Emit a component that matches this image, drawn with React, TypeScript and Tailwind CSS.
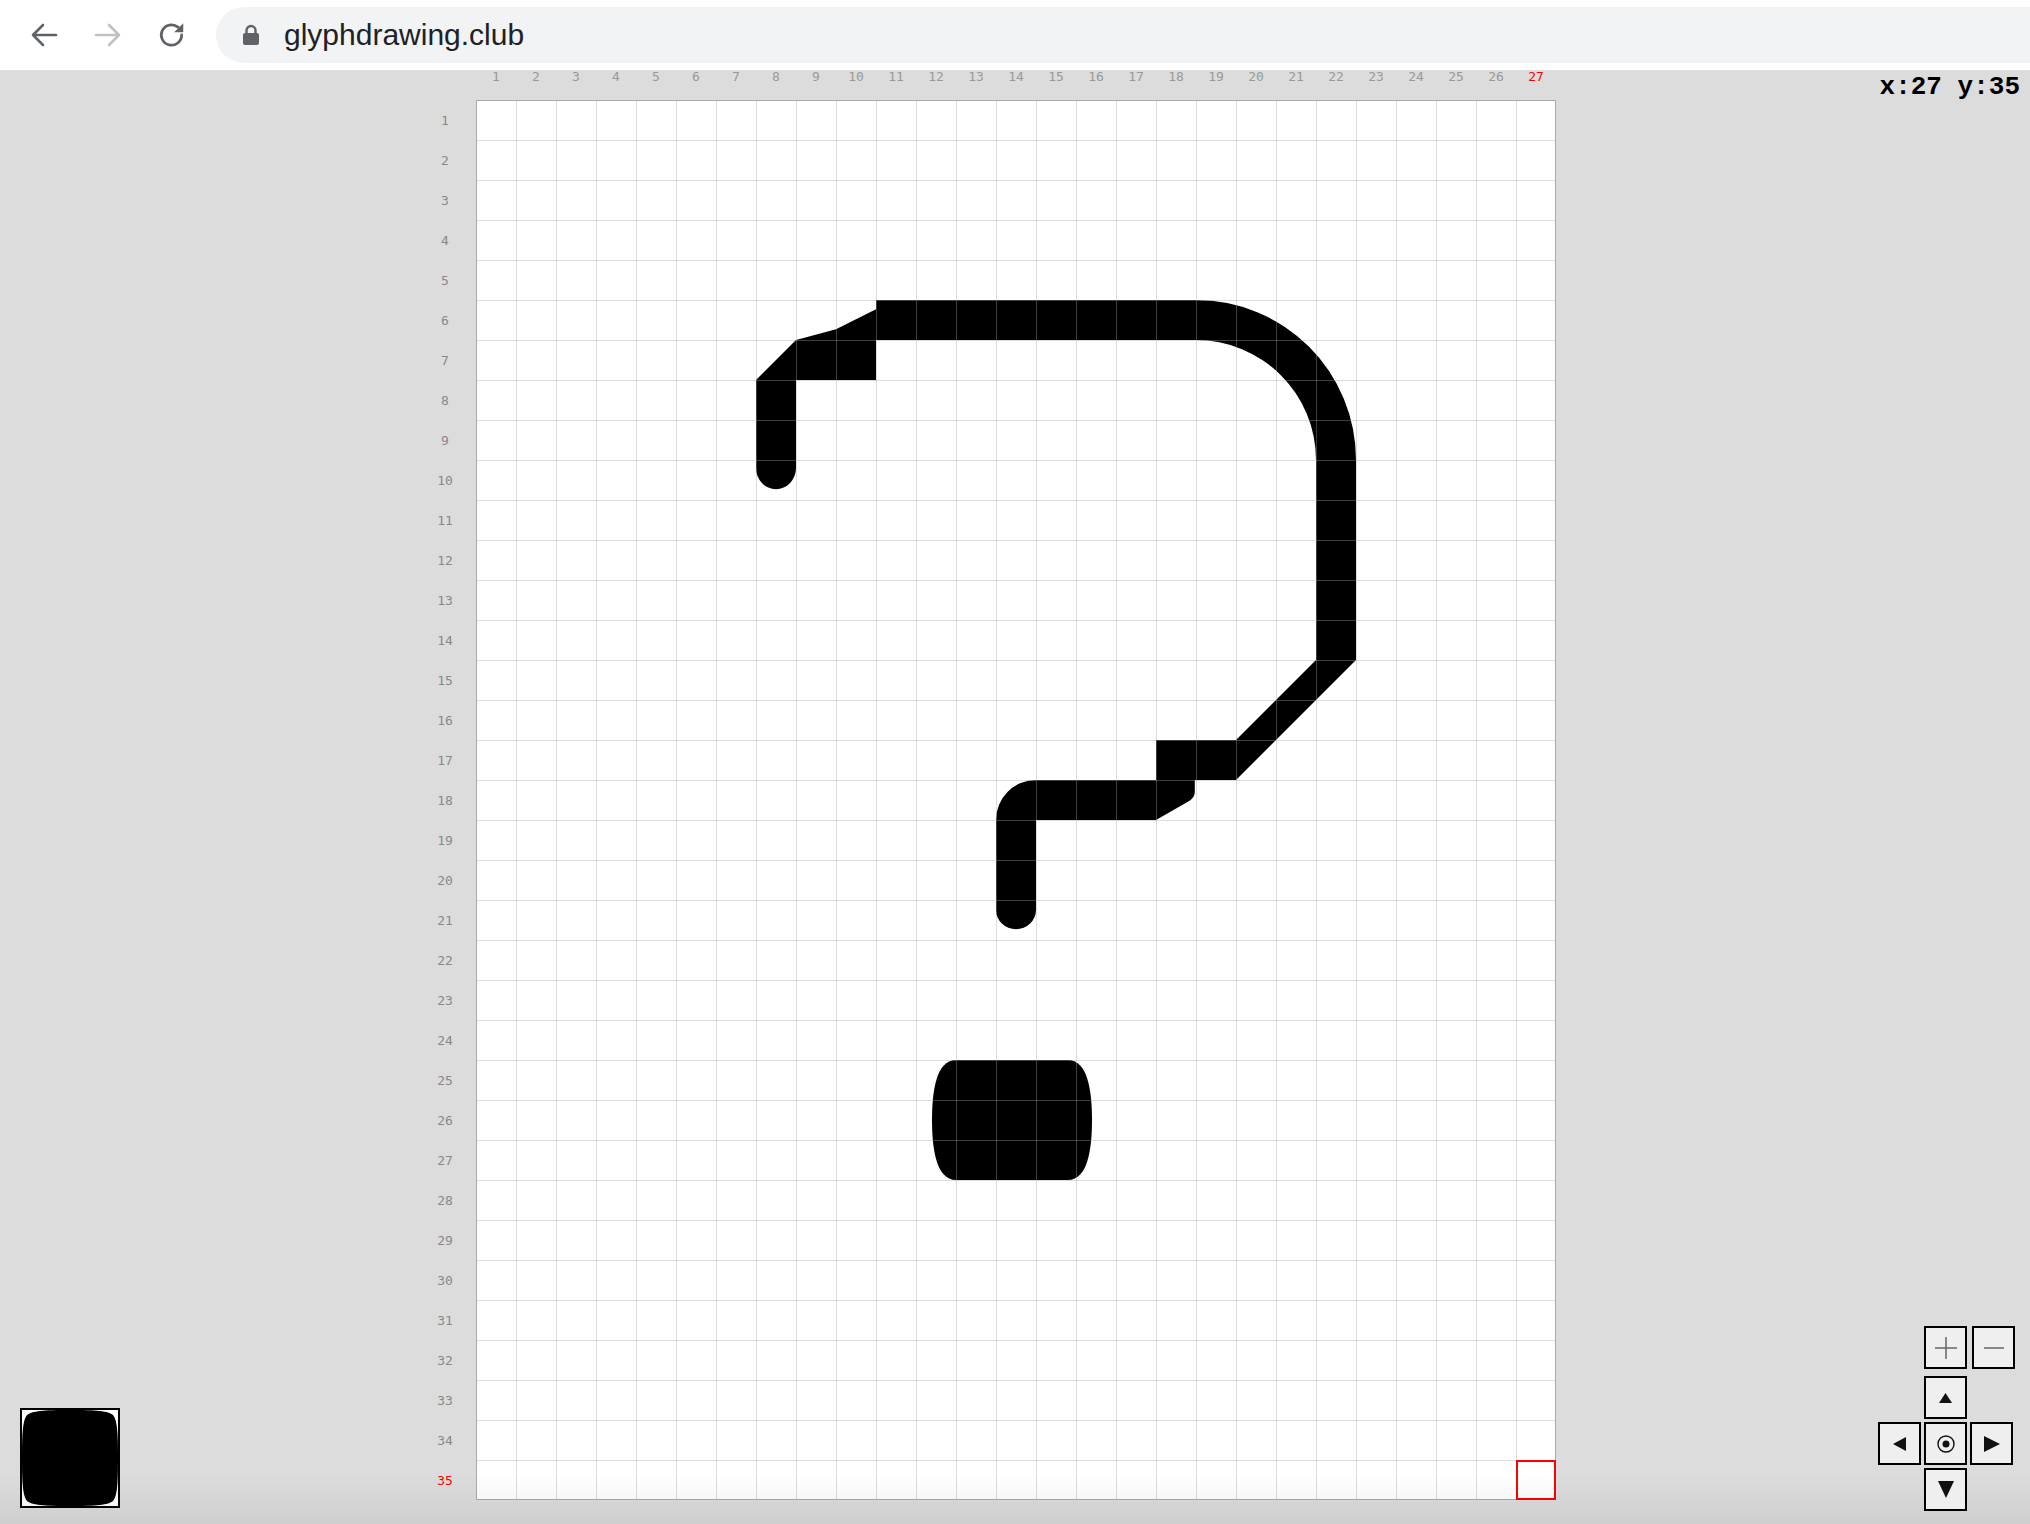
import React from "react";

const COLS = 27;
const ROWS = 35;
const CELL = 40;

// glyph outline, in cell units (1 unit = one grid square)
const GLYPH =
  "M10 5H18A4 4 0 0 1 22 9V14L19 17H17.97V17.3C17.97 17.45 17.85 17.52 17.7 17.6L17 18H14V20.25A0.5 0.48 0 0 1 13 20.25V18A1 1 0 0 1 14 17H17V16H19L21 14V9A3 3 0 0 0 18 6H10V7H8V9.2A0.5 0.53 0 0 1 7 9.2V7L8 6L9 5.73L10 5.23Z";
const DOT =
  "M12 24H14.8C15.3 24 15.4 24.8 15.4 25.5C15.4 26.2 15.3 27 14.8 27H12C11.5 27 11.4 26.2 11.4 25.5C11.4 24.8 11.5 24 12 24Z";
const BRUSH =
  "M48 0C75 0 86 1 91 5C95 10 96 21 96 48C96 75 95 86 91 91C86 95 75 96 48 96C21 96 10 95 5 91C1 86 0 75 0 48C0 21 1 10 5 5C10 1 21 0 48 0Z";

const BrowserBar = () => {
  return (
    <header className="h-[70px] bg-white flex items-center shrink-0 relative z-10">
      <div className="w-[216px] flex items-center">
        <svg width="28" height="24" viewBox="0 0 28 24" className="ml-[30px]">
          <path d="M26 12H3M13 2L3 12L13 22" fill="none" stroke="#5f6368" strokeWidth="2.6" strokeLinecap="round" strokeLinejoin="round" />
        </svg>
        <svg width="28" height="24" viewBox="0 0 28 24" className="ml-[36px]">
          <path d="M2 12H25M15 2L25 12L15 22" fill="none" stroke="#bdc1c6" strokeWidth="2.6" strokeLinecap="round" strokeLinejoin="round" />
        </svg>
        <svg width="30" height="30" viewBox="0 0 28 28" className="ml-[35px]">
          <path d="M23 14A9.5 9.5 0 1 1 19.6 6.7" fill="none" stroke="#5f6368" strokeWidth="2.6" strokeLinecap="round" />
          <path d="M24.5 3V11.5H16Z" fill="#5f6368" />
        </svg>
      </div>
      <div className="flex-1 h-[56px] bg-[#f1f3f4] rounded-l-full flex items-center">
        <svg width="18" height="22" viewBox="0 0 18 22" className="ml-[26px]">
          <path d="M4.5 10V6.5A4.5 4.5 0 0 1 13.5 6.5V10" fill="none" stroke="#5f6368" strokeWidth="2.4" />
          <rect x="1" y="9" width="16" height="12" rx="2" fill="#5f6368" />
        </svg>
        <span className="ml-[24px] text-[30px] text-[#202124] font-['Liberation_Sans',sans-serif] leading-none">
          glyphdrawing.club
        </span>
      </div>
    </header>
  );
};

const GridCanvas = () => {
  const w = COLS * CELL;
  const h = ROWS * CELL;
  return (
    <svg width={w} height={h} viewBox={`0 0 ${w} ${h}`} className="block bg-white">
      <g transform={`scale(${CELL})`}>
        <path d={GLYPH} fill="#000" />
        <path d={DOT} fill="#000" />
      </g>
      {Array.from({ length: COLS - 1 }, (_, i) => (
        <rect key={"v" + i} x={(i + 1) * CELL} y={0} width={1} height={h} fill="#a2a2a2" fillOpacity={0.38} />
      ))}
      {Array.from({ length: ROWS - 1 }, (_, i) => (
        <rect key={"h" + i} x={0} y={(i + 1) * CELL} width={w} height={1} fill="#a2a2a2" fillOpacity={0.38} />
      ))}
      <rect x={0.5} y={0.5} width={w - 1} height={h - 1} fill="none" stroke="#a9a9a9" />
      <rect x={26 * CELL + 1} y={34 * CELL + 1} width={CELL - 2} height={CELL - 2} fill="none" stroke="#ff0000" strokeWidth={2} />
    </svg>
  );
};

const CtrlButton = ({ children }: { children: React.ReactNode }) => (
  <div className="w-[43px] h-[43px] border-2 border-black bg-[#efefef] flex items-center justify-center">
    {children}
  </div>
);

const Controls = () => {
  return (
    <div className="absolute right-[17px] bottom-[13px] flex flex-col items-end gap-[7px]">
      <div className="flex gap-[5px] -mr-[2px]">
        <CtrlButton>
          <svg width="22" height="22" viewBox="0 0 22 22">
            <path d="M11 0V22M0 11H22" stroke="#666" strokeWidth="1.5" />
          </svg>
        </CtrlButton>
        <CtrlButton>
          <svg width="22" height="22" viewBox="0 0 22 22">
            <path d="M1 11H21" stroke="#666" strokeWidth="1.5" />
          </svg>
        </CtrlButton>
      </div>
      <div className="grid grid-cols-3 gap-[3px]">
        <div />
        <CtrlButton>
          <svg width="13" height="10" viewBox="0 0 13 10">
            <path d="M6.5 0L13 10H0Z" fill="#111" />
          </svg>
        </CtrlButton>
        <div />
        <CtrlButton>
          <svg width="13" height="14" viewBox="0 0 13 14">
            <path d="M0 7L13 0V14Z" fill="#111" />
          </svg>
        </CtrlButton>
        <CtrlButton>
          <svg width="18" height="18" viewBox="0 0 18 18">
            <circle cx="9" cy="9" r="8" fill="none" stroke="#111" strokeWidth="1.4" />
            <circle cx="9" cy="9" r="3.5" fill="#111" />
          </svg>
        </CtrlButton>
        <CtrlButton>
          <svg width="16" height="16" viewBox="0 0 16 16">
            <path d="M16 8L0 0V16Z" fill="#111" />
          </svg>
        </CtrlButton>
        <div />
        <CtrlButton>
          <svg width="16" height="17" viewBox="0 0 16 17">
            <path d="M0 0H16L8 17Z" fill="#111" />
          </svg>
        </CtrlButton>
        <div />
      </div>
    </div>
  );
};

export default function App() {
  return (
    <div className="relative w-[2030px] h-[1524px] overflow-hidden bg-[#dcdcdc] flex flex-col">
      <BrowserBar />
      <div className="flex font-['DejaVu_Sans_Mono',monospace] text-[13px]">
        <div className="w-[476px] flex flex-col items-end pr-[11px] pt-[31px]">
          {Array.from({ length: ROWS }, (_, i) => (
            <div
              key={i}
              className={
                "w-[40px] h-[40px] flex items-center justify-center " +
                (i === ROWS - 1 ? "text-[#ff0000]" : "text-[#888888]")
              }
            >
              {i + 1}
            </div>
          ))}
        </div>
        <div className="flex flex-col">
          <div className="flex h-[30px]">
            {Array.from({ length: COLS }, (_, i) => (
              <div
                key={i}
                className={
                  "w-[40px] h-[30px] text-center leading-[20px] -mt-[3px] " +
                  (i === COLS - 1 ? "text-[#ff0000]" : "text-[#999999]")
                }
              >
                {i + 1}
              </div>
            ))}
          </div>
          <GridCanvas />
        </div>
      </div>

      <div className="absolute top-[72px] right-[10px] leading-[30px] text-[26px] font-bold text-black font-['Liberation_Mono',monospace]">
        x:27 y:35
      </div>

      <div className="absolute left-[20px] bottom-[16px] w-[100px] h-[100px] border-2 border-black bg-white">
        <svg width="96" height="96" viewBox="0 0 96 96" className="block">
          <path d={BRUSH} fill="#000" />
        </svg>
      </div>

      <div className="absolute left-0 right-0 bottom-0 h-[50px] bg-gradient-to-b from-transparent to-black/[0.06] pointer-events-none" />

      <Controls />
    </div>
  );
}
